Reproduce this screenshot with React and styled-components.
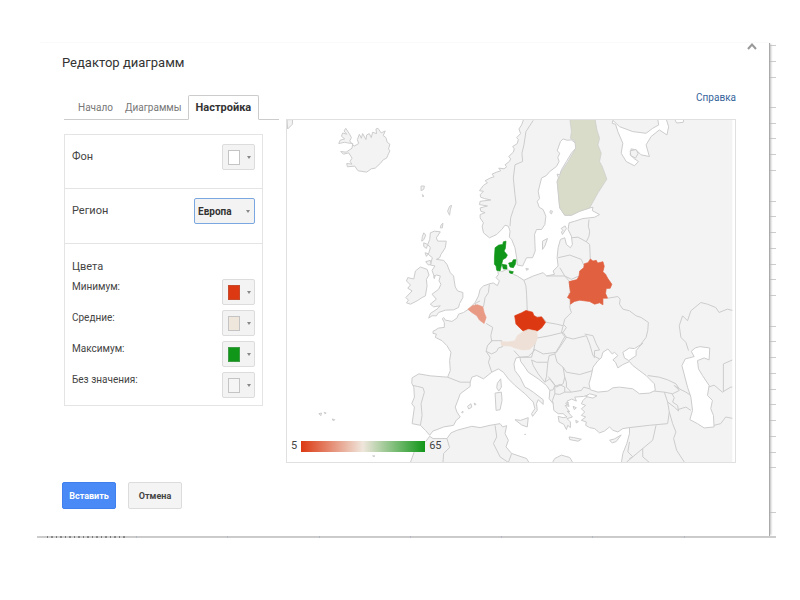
import React, { useState } from "react";
import styled, { createGlobalStyle } from "styled-components";

const GlobalStyle = createGlobalStyle`
  * {
    box-sizing: border-box;
  }

  body {
    margin: 0;
    background: #fff;
    color: #444;
    font-family: Roboto, "Liberation Sans", Arial, sans-serif;
    font-size: 11px;
    line-height: 16px;
  }

  button,
  select {
    font-family: inherit;
  }
`;

const Page = styled.div`
  padding: 43px 24px 62px 37px;
`;

const Sheet = styled.div`
  display: grid;
  grid-template-columns: 1fr 6px;
`;

const Dialog = styled.main`
  position: relative;
  padding: 11px 33px 27px 25px;
  border-right: 1px solid #aaa;
  box-shadow: 2px 0 2px -1px #bbb;
  background: #fff;
`;

const RowLines = styled.div`
  display: flex;
  flex-direction: column;
  padding-top: 2px;
`;

const RowLine = styled.div`
  height: ${(props) => props.$height}px;
  border-top: 1px solid #ccc;
`;

const SheetFooter = styled.div`
  display: grid;
  grid-template-columns: 10px 78px 12px repeat(7, 1fr);
  height: 2px;
  background: #ccc;
`;

const FooterCell = styled.div`
  border-right: 1px solid #b4b8c4;
`;

const ClippedText = styled.div`
  background: repeating-linear-gradient(
    90deg,
    #777 0 1px,
    #d0d0d0 1px 4px,
    #888 4px 6px,
    #d0d0d0 6px 9px
  );
`;

const CloseButton = styled.button`
  position: absolute;
  top: 0;
  right: 12px;
  display: flex;
  padding: 0;
  border: 0;
  background: none;
`;

const Title = styled.h1`
  margin: 0;
  font-size: 13px;
  line-height: 18px;
  font-weight: 400;
  color: #333;
`;

const Columns = styled.div`
  display: grid;
  grid-template-columns: 217px 1fr;
  gap: 7px;
  margin-top: 18px;
`;

const Settings = styled.div`
  padding-top: 5px;
`;

const Tabs = styled.nav`
  display: flex;
  align-items: flex-end;
  margin-left: 2px;
  padding-left: 8px;
  border-bottom: 1px solid #ccc;
`;

const Tab = styled.button`
  height: 25px;
  margin-bottom: -1px;
  padding: 0 ${(props) => (props.$active ? 7 : 5)}px;
  border: 1px solid ${(props) => (props.$active ? "#ccc" : "transparent")};
  border-bottom-color: ${(props) => (props.$active ? "#fff" : "transparent")};
  border-radius: 2px 2px 0 0;
  background: ${(props) => (props.$active ? "#fff" : "none")};
  color: ${(props) => (props.$active ? "#333" : "#777")};
  font-size: ${(props) => (props.$active ? 11 : 10)}px;
  font-weight: ${(props) => (props.$active ? 700 : 400)};
`;

const Panel = styled.section`
  width: 199px;
  margin: 14px 0 0 2px;
  border: 1px solid #e4e4e4;
`;

const PanelRow = styled.div`
  display: flex;
  justify-content: space-between;
  align-items: flex-start;
  height: ${(props) => props.$height}px;
  padding: 9px 7px 0;
  border-bottom: 1px solid #e4e4e4;
`;

const Label = styled.label`
  padding-top: ${(props) => (props.$small ? 0 : 5)}px;
  font-size: ${(props) => (props.$small ? 10 : 11)}px;
`;

const ColorsGroup = styled.div`
  padding: 15px 7px 7px;
`;

const GroupTitle = styled.h2`
  margin: 0;
  font-size: 11px;
  line-height: 16px;
  font-weight: 400;
`;

const ColorRows = styled.div`
  display: grid;
  gap: 5px;
  margin-top: 4px;
`;

const ColorRow = styled.div`
  display: flex;
  justify-content: space-between;
  align-items: flex-start;
`;

const SwatchButton = styled.button`
  display: flex;
  align-items: center;
  gap: 7px;
  width: 33px;
  height: 26px;
  padding: 0 0 0 5px;
  border: 1px solid #dcdcdc;
  border-radius: 2px;
  background: #f3f3f3;
`;

const Swatch = styled.span`
  width: 12px;
  height: 15px;
  border: 1px solid ${(props) => props.$border || "#c4c4c4"};
  background: ${(props) => props.$color};
`;

const Arrow = styled.span`
  border: 2px solid transparent;
  border-top: 3px solid #888;
  border-bottom: 0;
`;

const SelectBox = styled.div`
  display: grid;
  align-items: center;
  width: 61px;

  > * {
    grid-area: 1 / 1;
  }

  ${Arrow} {
    justify-self: end;
    margin-right: 5px;
    pointer-events: none;
  }
`;

const Select = styled.select`
  appearance: none;
  width: 100%;
  height: 26px;
  padding: 0 3px;
  border: 1px solid #7ba7e0;
  border-radius: 2px;
  background: #f3f3f3;
  color: #333;
  font-size: 10px;
  font-weight: 700;
`;

const Preview = styled.div`
  display: flex;
  flex-direction: column;
  align-items: flex-end;
`;

const HelpLink = styled.a`
  margin-bottom: 13px;
  color: #36649c;
  font-size: 10px;
  text-decoration: none;
`;

const MapBox = styled.div`
  position: relative;
  width: 100%;
  border: 1px solid #e0e0e0;

  > svg {
    display: block;
    width: 100%;
  }
`;

const Legend = styled.div`
  position: absolute;
  left: 4px;
  bottom: 8px;
  display: flex;
  align-items: center;
  gap: 4px;
  font-size: 11px;
`;

const LegendBar = styled.div`
  width: 124px;
  height: 11px;
  background: linear-gradient(90deg, #dc3912, #efe6dc 50%, #109618);
`;

const Actions = styled.div`
  display: flex;
  gap: 12px;
  margin-top: 19px;
`;

const ActionButton = styled.button`
  width: 54px;
  height: 27px;
  padding: 0;
  border: 1px solid ${(props) => (props.$primary ? "#3f80ee" : "#dcdcdc")};
  border-radius: 2px;
  background: ${(props) => (props.$primary ? "#4a8af6" : "#f4f4f4")};
  color: ${(props) => (props.$primary ? "#fff" : "#444")};
  font-size: 9px;
  font-weight: 700;
`;

// Map shapes share one 1350x1032 canvas whose origin is at 18,25.
const MAINLAND =
  "732,20 725,40 717,52 722,66 710,78 715,84 712,96 698,105 703,112 700,122 686,135 692,142 688,150 675,160 680,166 672,172 656,170 662,178 650,182 636,188 642,196 630,200 615,208 622,214 610,222 598,238 610,240 600,250 602,258 614,262 632,266 600,270 598,280 622,284 600,290 602,300 615,304 600,310 600,320 610,335 606,345 610,365 628,380 650,370 665,355 675,342 685,345 690,360 688,378 695,385 705,410 710,440 712,462 728,465 735,450 740,440 758,440 766,420 765,395 764,370 770,355 785,355 795,340 798,315 790,295 778,288 772,270 779,262 775,240 785,200 800,192 810,180 830,165 838,150 834,138 840,125 832,118 842,90 850,82 862,86 875,85 888,95 888,110 875,125 860,150 845,175 840,190 832,188 836,200 832,210 835,240 838,275 840,290 855,312 875,312 900,300 930,290 940,288 938,298 960,310 945,318 910,322 885,330 868,335 865,355 875,375 878,400 872,410 860,400 855,380 842,385 835,410 832,440 835,465 820,480 824,490 800,495 790,485 760,495 732,508 712,495 700,490 695,482 680,475 665,482 652,475 655,490 648,500 658,510 652,524 640,516 630,518 610,525 600,535 595,555 585,575 565,595 550,605 535,610 530,622 515,632 495,628 490,620 486,624 492,635 492,650 475,652 458,662 458,668 468,670 465,680 485,690 500,705 512,725 508,750 510,780 502,800 450,796 415,790 395,802 394,818 400,830 402,860 394,880 402,890 395,940 420,945 435,960 448,975 458,962 470,958 490,950 520,945 528,930 540,920 530,905 525,890 532,872 540,850 570,828 570,815 575,800 590,795 610,805 635,785 655,775 670,785 685,805 705,825 735,850 760,875 765,895 755,910 758,918 772,900 770,880 775,868 790,882 790,868 760,845 745,835 735,830 720,800 705,780 702,760 708,742 720,740 722,752 735,770 745,785 775,805 800,825 810,840 808,865 820,880 822,900 835,910 850,910 862,920 850,922 835,918 838,935 852,942 860,958 864,945 872,952 872,935 862,925 878,920 862,902 870,905 856,885 868,888 862,872 876,866 890,872 885,860 912,858 930,852 918,862 910,870 905,880 918,885 905,895 915,905 905,915 918,920 905,930 920,935 918,945 930,952 945,955 960,968 975,962 990,950 1000,960 1015,965 1030,955 1050,952 1050,970 1042,1000 1030,1030 1025,1062 1370,1062 1370,20";

const AFRICA =
  "388,1062 405,1015 435,995 448,978 458,985 500,985 512,968 530,960 575,948 600,952 630,945 660,940 668,950 680,946 675,970 685,990 678,1010 695,1030 740,1045 750,1062";

const BORDERS = [
  "760,26 738,60 732,100 726,125 728,150 705,160 700,200 705,250 708,275 700,295 692,320 690,345",
  "928,325 926,345 930,360 928,375 920,392",
  "875,380 895,378 920,392 930,400 932,444",
  "835,440 870,432 905,445 912,462",
  "840,470 855,495 875,505 898,495",
  "800,495 855,495 868,510 872,540",
  "732,508 738,525 740,550 742,600",
  "628,520 625,545 615,560 610,588",
  "600,570 585,578 590,590",
  "618,638 638,650 632,675 635,692 622,705",
  "622,705 635,690 665,690 668,708 655,712 650,722 635,730 618,722 622,705",
  "618,722 630,740 625,755 635,785",
  "502,800 540,815 570,815",
  "398,825 412,828 428,832 432,845 422,880 425,915 420,945",
  "770,618 790,622 800,635 830,640 850,645",
  "772,682 810,675 850,665 860,650 850,640",
  "770,682 765,700 762,715 790,730 830,725 860,680 850,665",
  "702,720 720,740 745,738 765,718",
  "720,740 755,740 762,715",
  "770,755 755,748 760,765 775,790 795,815 800,798 804,755 770,755",
  "804,755 808,735 825,730",
  "825,730 832,755 850,770 855,800 850,820 830,830 815,810 805,798",
  "795,815 810,805 825,825 820,838 810,840",
  "825,828 840,822 855,830 855,845 840,852 825,850 825,828",
  "825,850 818,870 820,880",
  "855,845 875,845 905,840",
  "868,545 872,575 870,590 875,605 855,625 850,645 845,665 855,678",
  "855,678 880,685 920,675 930,700 940,735 960,745",
  "855,678 840,705 825,730",
  "850,770 860,785 900,792 940,780",
  "855,800 860,815 860,830 875,845",
  "915,670 940,675 950,700 960,718 945,720 944,742",
  "905,840 912,830 930,835",
  "985,562 1015,557 1022,565 1020,580 1030,595 1050,600 1070,615 1085,620 1107,635 1105,660 1100,680 1085,700",
  "1105,795 1140,800 1165,808 1190,820 1200,835 1220,845 1235,855",
  "1125,842 1155,845 1180,850 1200,840 1185,825 1200,835",
  "1155,845 1165,875 1185,890 1198,902 1195,885 1180,875 1185,862 1178,850",
  "1195,898 1220,890 1235,900",
  "1165,875 1170,905 1165,940 1110,945 1050,952",
  "1170,905 1180,940 1190,965 1183,985 1192,1020 1218,1060",
  "1130,945 1120,990 1060,1040 1045,1025 1050,995",
  "1090,1015 1090,1040 1110,1057",
  "1040,1057 1060,1040 1050,1045",
  "1228,720 1220,695 1205,680 1200,645 1210,615 1225,630 1235,600 1265,575 1285,580 1310,590 1320,605 1345,595 1365,600",
  "1288,830 1305,824 1330,845 1355,830 1365,830",
  "1333,845 1333,760 1365,746",
  "1305,945 1325,940 1340,920 1365,925",
  "500,985 508,1012 490,1030 488,1057",
  "645,945 650,980 640,1000 660,1040 685,1057",
  "695,1030 685,1057",
];

const SEAS = [
  // White Sea
  "998,35 1008,38 1015,60 1030,95 1025,125 1040,150 1065,163 1077,150 1065,142 1052,130 1055,112 1070,115 1085,130 1110,135 1100,100 1115,75 1140,55 1163,70 1168,45 1160,20 1135,20 1138,40 1120,50 1100,65 1060,60 1020,45 1000,26",
  "1185,20 1192,34 1212,32 1214,20",
  // Black Sea
  "985,715 970,725 965,742 955,750 940,770 935,795 928,820 932,838 955,845 985,842 1000,832 1020,830 1060,835 1080,850 1110,848 1128,840 1125,820 1100,795 1060,765 1050,753 1030,762 1015,772 1008,755 1000,748 1015,735 1005,725 998,730",
  // Azov
  "1030,725 1050,712 1065,714 1090,698 1078,710 1070,720 1070,735 1048,750 1035,742",
  // Caspian
  "1262,708 1292,712 1290,748 1275,742 1255,750 1258,775 1270,795 1290,825 1285,855 1300,870 1295,895 1303,915 1305,950 1275,953 1255,940 1232,928 1240,900 1235,860 1225,830 1208,765 1218,745 1245,738 1236,722 1248,712",
  // Marmara
  "918,858 930,850 952,856 940,863",
];

const ISLANDS = [
  // Iceland
  "207,88 212,78 205,65 195,50 190,58 198,68 186,64 182,74 192,82 178,86 174,96 192,92 200,94 216,96 214,110 196,122 180,120 188,128 204,124 214,140 208,150 214,158 198,156 200,166 222,164 232,178 258,182 272,172 284,170 300,155 308,145 318,140 328,118 324,112 328,98 320,92 316,78 308,72 314,58 302,64 292,50 286,52 288,66 276,62 272,78 266,66 258,70 256,84 246,66 242,80 236,68 230,84 234,96 220,104",
  "20,52 34,38 35,24 18,24",
  "422,224 432,224 430,234 422,238",
  "426,250 429,252 428,257",
  // Great Britain
  "450,365 462,360 480,362 468,380 472,390 498,390 495,410 482,430 478,440 468,445 490,448 500,460 510,485 520,495 522,510 525,528 532,540 548,545 548,560 538,578 535,590 520,597 495,598 475,605 468,615 455,615 445,622 450,608 470,595 480,585 460,588 450,580 468,565 455,550 475,535 482,520 476,510 480,495 468,492 462,498 455,478 464,465 450,462 456,440 444,430 450,410 442,400 448,385",
  // Ireland
  "405,480 420,468 440,475 446,492 438,505 440,525 435,555 425,560 410,570 390,580 378,576 384,568 376,560 395,540 382,532 390,522 378,510 382,500 400,504",
  "430,365 436,372 430,386 424,390 426,376",
  "430,395 442,400 438,412 430,406",
  "434,425 444,428 438,436",
  "436,452 450,448 452,460 444,462",
  "482,342 488,336 486,350 480,350",
  "502,300 508,285 514,282 510,296 508,312",
  "460,498 464,492 462,503",
  // Mediterranean
  "645,848 664,845 666,870 660,898 648,900",
  "652,818 662,805 664,830 656,842 650,832",
  "705,928 722,930 745,922 742,950 725,944",
  "562,888 572,880 575,890 566,896",
  "582,878 588,882 584,884",
  "868,980 882,982 905,987 895,993 870,988",
  "990,990 1005,986 1025,974 1010,994 998,998",
  "544,906 548,902 548,908",
  "734,972 737,972 736,974",
  // Baltic
  "788,390 803,382 795,405 788,415",
  "844,352 856,344 860,352 848,370 845,362 850,358",
  "812,298 818,300 815,308 810,304",
  "738,472 746,474 740,478",
  "1052,118 1070,114 1076,126 1068,140 1054,132",
  // Atlantic
  "114,910 122,908 120,916",
  "130,906 136,908 132,910",
  "154,926 162,928 158,932",
  "276,1037 283,1037 280,1040",
  "815,1062 825,1045 845,1035 870,1042 882,1062",
  "858,878 866,876 862,884",
  "880,888 890,892 884,898",
  "888,930 896,934 890,938",
];

const COUNTRIES = [
  {
    name: "finland",
    fill: "#d8dcc8",
    points:
      "870,20 946,20 952,55 960,80 955,100 965,125 960,150 968,165 982,203 955,245 930,290 900,300 875,312 855,312 840,290 835,240 832,210 845,180 865,150 888,110 885,88 872,80 875,60",
  },
  {
    name: "denmark",
    fill: "#109618",
    points:
      "650,478 648,465 643,460 643,440 645,410 656,402 668,400 670,392 678,390 676,412 672,420 682,432 678,440 668,446 665,460 660,480",
  },
  { name: "funen", fill: "#109618", points: "666,460 680,462 681,474 670,474" },
  {
    name: "zealand",
    fill: "#109618",
    points: "686,456 696,454 700,446 708,446 706,460 700,470 690,468",
  },
  { name: "lolland", fill: "#109618", points: "688,480 700,482 697,488 689,486" },
  {
    name: "belarus",
    fill: "#e06040",
    points:
      "868,512 892,506 898,495 900,480 912,470 914,458 925,455 932,444 940,450 950,448 954,456 970,452 974,466 970,482 978,490 985,503 997,520 992,532 980,533 978,548 984,562 970,562 970,582 960,576 945,580 930,572 900,568 884,572 872,580 872,565 863,560 872,545",
  },
  {
    name: "czechia",
    fill: "#dc3912",
    points:
      "704,615 725,606 738,599 758,604 762,614 772,620 785,618 797,635 785,652 770,662 748,656 732,663 720,652 708,640",
  },
  {
    name: "austria",
    fill: "#eee0d6",
    points:
      "662,693 685,694 705,690 712,675 730,662 745,656 770,661 773,682 765,700 750,716 728,718 705,712 690,706 665,705",
  },
  {
    name: "belgium",
    fill: "#e89a84",
    points:
      "563,595 578,584 592,582 608,588 612,605 618,620 612,638 598,628 590,615 575,605",
  },
];

const COLOR_OPTIONS = [
  { id: "min", label: "Минимум:", color: "#dc3912", border: "#c64a2c" },
  { id: "mid", label: "Средние:", color: "#efe6dc" },
  { id: "max", label: "Максимум:", color: "#109618", border: "#3f9b45" },
  { id: "none", label: "Без значения:", color: "#f5f5f5" },
];

const ROW_HEIGHTS = [
  16, 16, 30, 16, 15, 16, 16, 31, 15, 16, 16, 16, 15, 16, 31, 15, 16, 16, 16,
  15, 16, 16, 16, 15, 45, 24,
];

const SwatchPicker = ({ id, color, border }) => (
  <SwatchButton id={id} type="button">
    <Swatch $color={color} $border={border} />
    <Arrow />
  </SwatchButton>
);

const EuropeMap = () => (
  <svg viewBox="18 25 1350 1032" strokeLinejoin="round">
    <g fill="#f3f3f3" stroke="#ccc" strokeWidth="3">
      <polygon points={MAINLAND} />
      <polygon points={AFRICA} />
    </g>
    <g fill="none" stroke="#ccc" strokeWidth="3">
      {BORDERS.map((points) => (
        <polyline key={points} points={points} />
      ))}
    </g>
    <g fill="#fff" stroke="#ccc" strokeWidth="3">
      {SEAS.map((points) => (
        <polygon key={points} points={points} />
      ))}
    </g>
    <g fill="#f3f3f3" stroke="#ccc" strokeWidth="3">
      {ISLANDS.map((points) => (
        <polygon key={points} points={points} />
      ))}
    </g>
    {COUNTRIES.map((country) => (
      <polygon
        key={country.name}
        points={country.points}
        fill={country.fill}
        stroke={country.name === "finland" ? "#ccc" : country.fill}
        strokeWidth="2"
      />
    ))}
    <rect x="1360" y="20" width="10" height="1040" fill="#fff" />
  </svg>
);

const App = () => {
  const [activeTab, setActiveTab] = useState("Настройка");
  const [region, setRegion] = useState("Европа");

  return (
    <Page>
      <GlobalStyle />
      <Sheet>
        <Dialog>
          <CloseButton type="button">
            <svg width="10" height="7" viewBox="0 0 10 7">
              <path d="M1 6 5 1.5 9 6" fill="none" stroke="#999" strokeWidth="2" />
            </svg>
          </CloseButton>
          <Title>Редактор диаграмм</Title>

          <Columns>
            <Settings>
              <Tabs>
                {["Начало", "Диаграммы", "Настройка"].map((tab) => (
                  <Tab
                    key={tab}
                    type="button"
                    $active={tab === activeTab}
                    onClick={() => setActiveTab(tab)}
                  >
                    {tab}
                  </Tab>
                ))}
              </Tabs>

              <Panel>
                <PanelRow $height={54}>
                  <Label htmlFor="background">Фон</Label>
                  <SwatchPicker id="background" color="#fff" />
                </PanelRow>
                <PanelRow $height={55}>
                  <Label htmlFor="region">Регион</Label>
                  <SelectBox>
                    <Select
                      id="region"
                      value={region}
                      onChange={(e) => setRegion(e.target.value)}
                    >
                      <option value="Европа">Европа</option>
                    </Select>
                    <Arrow />
                  </SelectBox>
                </PanelRow>
                <ColorsGroup>
                  <GroupTitle>Цвета</GroupTitle>
                  <ColorRows>
                    {COLOR_OPTIONS.map((option) => (
                      <ColorRow key={option.id}>
                        <Label htmlFor={option.id} $small>
                          {option.label}
                        </Label>
                        <SwatchPicker {...option} />
                      </ColorRow>
                    ))}
                  </ColorRows>
                </ColorsGroup>
              </Panel>
            </Settings>

            <Preview>
              <HelpLink href="#help">Справка</HelpLink>
              <MapBox>
                <EuropeMap />
                <Legend>
                  <span>5</span>
                  <LegendBar />
                  <span>65</span>
                </Legend>
              </MapBox>
            </Preview>
          </Columns>

          <Actions>
            <ActionButton type="button" $primary>
              Вставить
            </ActionButton>
            <ActionButton type="button">Отмена</ActionButton>
          </Actions>
        </Dialog>
        <RowLines>
          {ROW_HEIGHTS.map((height, index) => (
            <RowLine key={index} $height={height} />
          ))}
        </RowLines>
      </Sheet>
      <SheetFooter>
        <div />
        <ClippedText />
        {Array.from({ length: 7 }, (_, index) => (
          <FooterCell key={index} />
        ))}
      </SheetFooter>
    </Page>
  );
};

export default App;
